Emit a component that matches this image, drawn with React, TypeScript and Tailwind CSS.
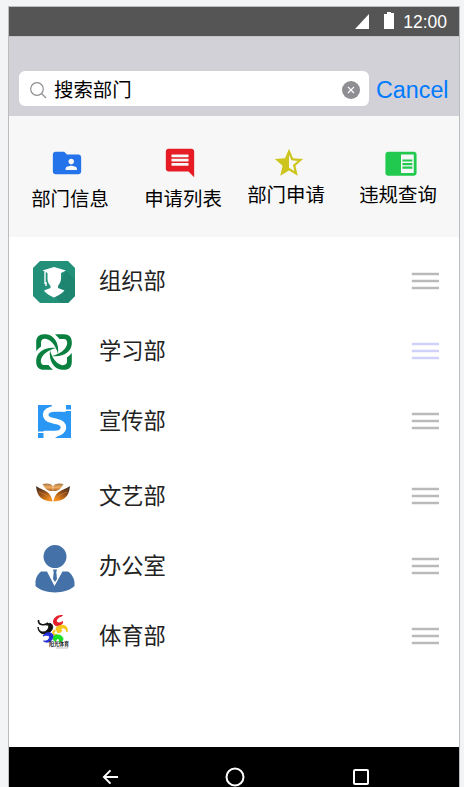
import { ReactNode } from "react";
import clsx from "clsx";
import {
  MdChromeReaderMode,
  MdComment,
  MdFolderShared,
  MdStarHalf,
} from "react-icons/md";

const GraduateLogo = () => (
  <svg width="42" height="42" viewBox="0 0 42 42">
    <path d="M7 0H35L42 7V35L35 42H7L0 35V7Z" fill="#23907a" />
    <path d="M33 10L42 19V35L35 42H28L20 34Z" fill="#1e8570" />
    <path
      d="M21 6L33 9.500L28 12V18C28 21 26 23 25 25V27L31.500 29.500C29 33 24 35 21 36.500C18 35 13 33 11 29.500L17.500 27V25C16 23 14.500 21 14.500 18V12L9.500 9.500Z"
      fill="#fff"
    />
    <path d="M12 10.500V23M13 21V25" stroke="#fff" strokeWidth="1.400" />
  </svg>
);

const PinwheelLogo = () => (
  <svg width="36" height="36" viewBox="0 0 36 36" fill="#0a8040">
    {[0, 90, 180, 270].map((angle) => (
      <path
        key={angle}
        transform={`rotate(${angle} 18 18)`}
        d="M.2 17V8C.2 3 3 .2 8 .2H10C18 .8 23.500 9 22 20C20 12 15.500 6.200 10.500 5C7 4.300 5 5.700 5 8.700V12.500C3 14 1.500 15.500 .2 17Z"
      />
    ))}
  </svg>
);

const PublicityLogo = () => (
  <svg width="33" height="33" viewBox="0 0 33 33">
    <path fill="#2997f3" d="M0 0H33V33H0Z" />
    <path
      d="M27 4H17C5 4 5 14.500 14.500 15.500L18.500 16.500C28.500 18 27.500 28.500 17 28.500H6"
      stroke="#fff"
      strokeWidth="5.600"
      fill="none"
    />
    <path d="M14 0H27V6.600H24V3H13ZM27 4.500H33V6H27ZM0 26.500H6V28H0ZM5.500 26H8V31H20L17 33H5.500Z" fill="#fff" />
    <path d="M26.500 0H28V6.500H26.500Z" fill="#fff" />
  </svg>
);

const LotusLogo = () => (
  <svg width="34" height="19" viewBox="0 0 34 19">
    <defs>
      <linearGradient id="leaf" x1="0" y1="0" x2="0.600" y2="1">
        <stop offset="0" stopColor="#332a24" />
        <stop offset="0.500" stopColor="#8c4b18" />
        <stop offset="1" stopColor="#f28c1c" />
      </linearGradient>
      <linearGradient id="bud" x1="0" y1="0" x2="0" y2="1">
        <stop offset="0" stopColor="#9b7245" />
        <stop offset="0.500" stopColor="#f2ae62" />
        <stop offset="1" stopColor="#a75e1b" />
      </linearGradient>
    </defs>
    {[false, true].map((flipped) => (
      <g key={String(flipped)} transform={flipped ? "translate(34 0) scale(-1 1)" : undefined}>
        <path d="M0 3C5 7 15 7 16.500 18.500C5 18 1 13 0 3Z" fill="url(#leaf)" />
        <path d="M3 9C8 11 13 13 16 18" stroke="#e39a55" strokeWidth="0.500" fill="none" />
        <path d="M6.500 1C10 0 15 0 16.800 3V8C12 8.500 9 6 6.500 1Z" fill="url(#bud)" />
      </g>
    ))}
  </svg>
);

const OfficeLogo = () => (
  <svg width="40" height="48" viewBox="0 0 40 48" fill="#4472a8">
    <circle cx="20" cy="11.600" r="11.500" />
    <path d="M6 26.500H12L19.500 41L27.500 26.500H33C37 29 39.500 34 39.500 38V41C31 49.500 9 49.500 .5 41V36C1 32 3 29 6 26.500Z" />
    <path d="M18 24.500H22L21.300 27L22 34L20 37L18 34L18.700 27Z" />
  </svg>
);

const SportsLogo = () => (
  <svg width="34" height="34" viewBox="0 0 34 34" fill="none">
    <path d="M1.500 5C1 10 7 11 11 8" stroke="#111" strokeWidth="1.600" />
    <path d="M1 12C1 20 10 21 14.500 15.500C18 10 13 6 9.500 10C14 9.500 11 17 6 17Q2 17 1 12Z" fill="#111" stroke="#111" />
    <path d="M25.500 .5C17 0 14.500 7 18 10C21 12.500 26.500 9 25.500 6.500C22 9.500 18 7.500 20 4Q22 1.500 25.500 .5Z" fill="#e51f2a" stroke="#e51f2a" />
    <path d="M19 13C24 8 32 10 30 17C28.500 12.500 26 12 23.500 14C26 15 24.500 18.500 20.500 17.500Z" fill="#f6c719" stroke="#f6c719" />
    <path d="M18.500 15.500C15 16 15.500 21 20 19.500" stroke="#f6c719" strokeWidth="2" />
    <path d="M6 21C10 15 18 18 16 23C14 27.500 9 28 6.500 26C11 27 14 22.500 11.500 20.500Q9 19.500 6 21Z" fill="#2530d8" stroke="#2530d8" />
    <path d="M19 20C26 19 29 26 22 27C24 23.500 19 22 18.500 26.500C15 25 16 21 19 20Z" fill="#16df25" stroke="#16df25" />
    <text
      x="12"
      y="30.500"
      fill="#222"
      fontSize="5.500"
      fontWeight="700"
      textLength="20"
      lengthAdjust="spacingAndGlyphs"
      fontFamily="Noto Sans CJK SC, sans-serif"
    >
      阳光体育
    </text>
    <path d="M19 33H31" stroke="#999" strokeWidth="0.600" />
  </svg>
);

const Handle = ({ active }: { active?: boolean }) => (
  <svg
    width="28"
    height="18"
    viewBox="0 0 28 18"
    className={clsx("shrink-0", active ? "text-[#d0d2fb]" : "text-[#bababa]")}
    fill="currentColor"
  >
    <path d="M.8 .7H28V3.200H.8ZM.8 7.700H28V10.200H.8ZM.8 14.700H28V17.200H.8Z" />
  </svg>
);

const Shortcut = ({
  label,
  className,
  children,
}: {
  label: string;
  className: string;
  children: ReactNode;
}) => (
  <div className={clsx("flex w-[78px] flex-col items-center", className)}>
    {children}
    <span className="text-[19.400px] leading-6 whitespace-nowrap text-black">{label}</span>
  </div>
);

const departments = [
  { name: "组织部", logo: <GraduateLogo />, row: "h-[70px]", offset: "pt-0.5 pr-px" },
  { name: "学习部", logo: <PinwheelLogo />, row: "h-[70px]", offset: "pt-0.5" },
  { name: "宣传部", logo: <PublicityLogo />, row: "h-[70px]", offset: "pt-px" },
  { name: "文艺部", logo: <LotusLogo />, row: "h-20", offset: "pb-[7px] pr-[3px]" },
  { name: "办公室", logo: <OfficeLogo />, row: "h-[60px]", offset: "pt-[5px] pl-px" },
  { name: "体育部", logo: <SportsLogo />, row: "h-20", offset: "pb-[9px]" },
];

const StatusBar = () => (
  <div className="flex h-[29px] items-center justify-end bg-[#555] pr-3 text-white">
    <svg width="14" height="15" viewBox="0 0 14 15" fill="currentColor">
      <path d="M14 0V15H0Z" />
    </svg>
    <svg width="10" height="17" viewBox="0 0 10 17" className="mr-[9px] mb-0.5 ml-[15px]" fill="currentColor">
      <path d="M3 0H7V1H10V17H0V2H3Z" />
    </svg>
    <span className="pt-0.5 text-[17.500px] leading-none">12:00</span>
  </div>
);

const SearchHeader = () => (
  <div className="flex h-20 items-end border-t border-[#c4c4c6] bg-[#d2d1d7] pb-2.5 pl-2.5">
    <div className="flex h-[35px] w-[350px] items-center rounded-md bg-white pr-[9px] pl-[11px]">
      <svg width="17" height="17" viewBox="0 0 17 17" className="mt-1" fill="none" stroke="#8e8e93" strokeWidth="1.200">
        <circle cx="7" cy="7" r="6.300" />
        <path d="M11.500 11.500L16 16" />
      </svg>
      <span className="mt-0.5 ml-[7px] flex-1 text-[19.400px] leading-6 text-black">搜索部门</span>
      <svg width="18" height="18" viewBox="0 0 18 18" className="mt-0.5" fill="none">
        <circle cx="9" cy="9" r="9" fill="#8e8e93" />
        <path d="M6 6L12 12M12 6L6 12" stroke="#fff" strokeWidth="1.200" />
      </svg>
    </div>
    <span className="ml-[7px] text-[23.300px] leading-[31px] text-[#007aff]">Cancel</span>
  </div>
);

const NavBar = () => (
  <div className="h-10 overflow-hidden bg-black text-white">
    <div className="flex h-[60px] items-center justify-between pr-[90px] pl-[93px]">
      <svg width="16" height="16" viewBox="0 0 17 16" fill="none" stroke="currentColor" strokeWidth="2">
        <path d="M9 1L2 8L9 15M2 8H17" />
      </svg>
      <svg width="20" height="20" viewBox="0 0 20 20" className="mr-px" fill="none" stroke="currentColor" strokeWidth="2">
        <circle cx="10" cy="10" r="8.500" />
      </svg>
      <svg width="16" height="16" viewBox="0 0 16 16" fill="none" stroke="currentColor" strokeWidth="2">
        <rect x="1" y="1" width="14" height="14" rx="1" />
      </svg>
    </div>
  </div>
);

const App = () => {
  return (
    <div className="h-[787px] w-[464px] overflow-hidden bg-[#f2f4f5] pt-1.5 pl-2 font-['Liberation_Sans','Noto_Sans_CJK_SC',sans-serif]">
      <div className="h-[781px] w-[452px] border-x border-t border-[#bdbdbd] bg-white">
        <StatusBar />
        <SearchHeader />

        <div className="flex h-[121px] bg-[#f7f7f7] pl-[22px]">
          <Shortcut label="部门信息" className="pt-[30px]">
            <MdFolderShared className="mr-1.5 mb-[7px] size-[34px] text-[#2573ea]" />
          </Shortcut>
          <Shortcut label="申请列表" className="ml-[35px] pt-[30px]">
            <MdComment className="mr-[7px] mb-[7px] size-[34px] text-[#e61b23]" />
          </Shortcut>
          <Shortcut label="部门申请" className="ml-[25px] pt-[30px]">
            <MdStarHalf className="mb-[3px] ml-1.5 size-[34px] text-[#cdc51d]" />
          </Shortcut>
          <Shortcut label="违规查询" className="ml-[34px] pt-[30px]">
            <MdChromeReaderMode className="mb-[3px] ml-1.5 size-[34px] text-[#22c94f]" />
          </Shortcut>
        </div>

        <div className="h-[510px] pt-[9px]">
          {departments.map(({ name, logo, row, offset }, index) => (
            <div key={name} className={clsx("flex items-center pr-5 pl-[22px]", row)}>
              <div className={clsx("flex w-[46px] shrink-0 justify-center", offset)}>{logo}</div>
              <span className="ml-[22px] flex-1 pt-0.5 text-[22.300px] leading-7 text-[#222]">{name}</span>
              <Handle active={index === 1} />
            </div>
          ))}
        </div>

        <NavBar />
      </div>
    </div>
  );
};

export default App;
